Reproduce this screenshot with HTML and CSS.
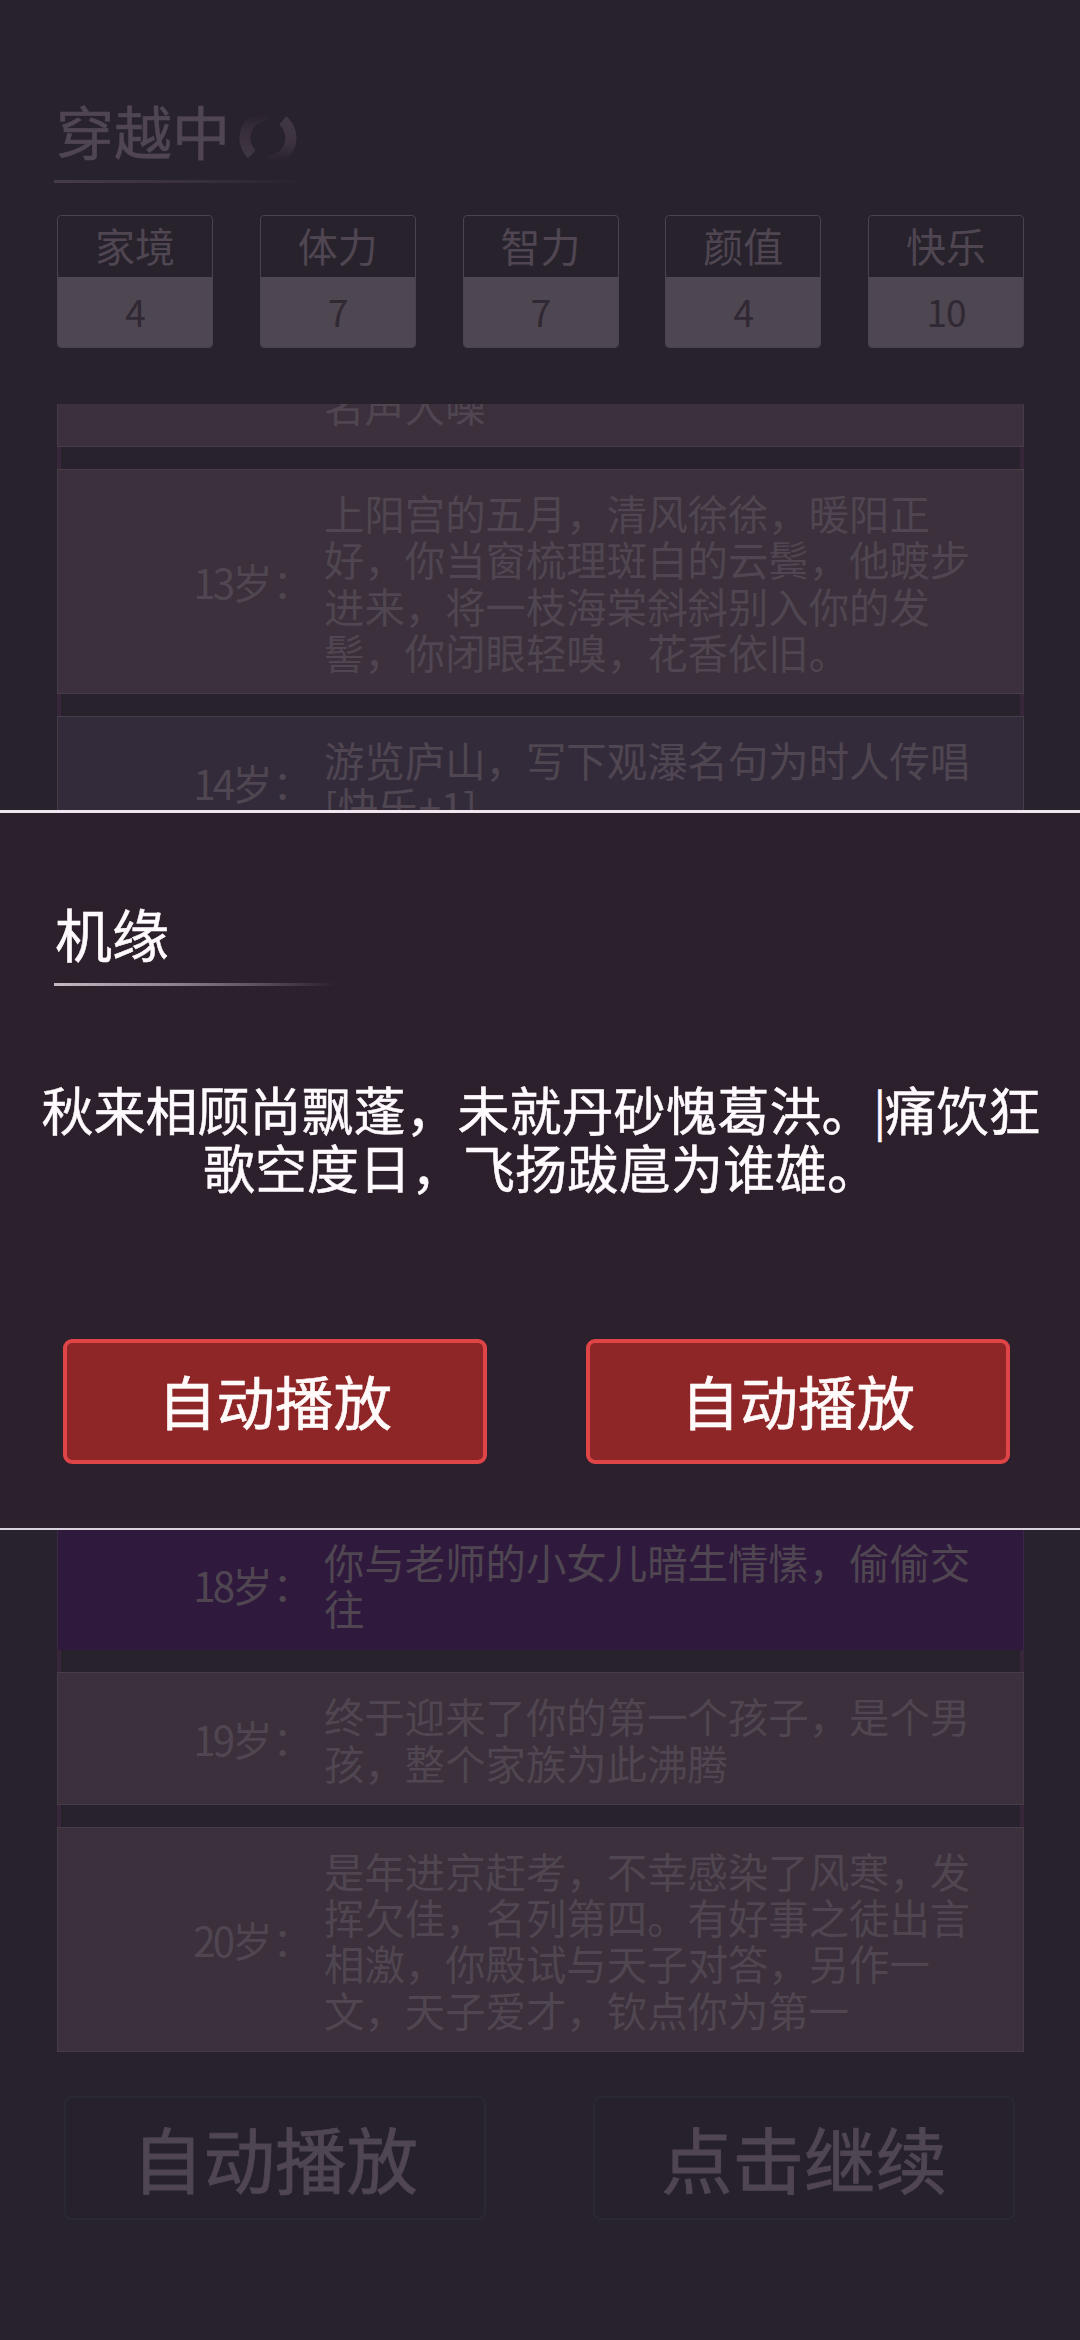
FILE: index.html
```html
<!DOCTYPE html>
<html lang="zh-CN">
<head>
<meta charset="utf-8">
<title>穿越中</title>
<link rel="stylesheet" href="styles.css">
</head>
<body>
<main class="game">
  <header class="heading">
    <h1 class="heading-text">穿越中</h1>
    <svg class="spinner" viewBox="0 0 60 60">
      <defs>
        <linearGradient id="arcRight" x1="0" y1="0" x2="0" y2="1"><stop offset="0" stop-color="#403743"/><stop offset="0.55" stop-color="#3c333f"/><stop offset="1" stop-color="#29222e"/></linearGradient>
        <linearGradient id="arcLeft" x1="0" y1="1" x2="0" y2="0"><stop offset="0" stop-color="#3f3642"/><stop offset="0.6" stop-color="#372e3a"/><stop offset="1" stop-color="#29222e"/></linearGradient>
      </defs>
      <path d="M44.800 12.400A23 23 0 0 1 30 53" fill="none" stroke="url(#arcRight)" stroke-width="11"/>
      <path d="M13.700 46.300A23 23 0 0 1 30 7" fill="none" stroke="url(#arcLeft)" stroke-width="11"/>
    </svg>
  </header>
  <div class="rule rule-dim"></div>

  <section class="stats">
    <div class="stat"><div class="stat-name">家境</div><div class="stat-value">4</div></div>
    <div class="stat"><div class="stat-name">体力</div><div class="stat-value">7</div></div>
    <div class="stat"><div class="stat-name">智力</div><div class="stat-value">7</div></div>
    <div class="stat"><div class="stat-name">颜值</div><div class="stat-value">4</div></div>
    <div class="stat"><div class="stat-name">快乐</div><div class="stat-value">10</div></div>
  </section>

  <section class="log">
    <div class="entry entry-clipped"><div class="age"></div><div class="story">名声大噪</div></div>
    <div class="entry"><div class="age"><span class="num">13</span>岁：</div><div class="story">上阳宫的五月，清风徐徐，暖阳正<br>好，你当窗梳理斑白的云鬓，他踱步<br>进来，将一枝海棠斜斜别入你的发<br>髻，你闭眼轻嗅，花香依旧。</div></div>
    <div class="entry entry-blue"><div class="age"><span class="num">14</span>岁：</div><div class="story">游览庐山，写下观瀑名句为时人传唱<br>[快乐+1]</div></div>
    <div class="entry entry-fill"></div>
    <div class="entry entry-purple"><div class="age"><span class="num">18</span>岁：</div><div class="story">你与老师的小女儿暗生情愫，偷偷交<br>往</div></div>
    <div class="entry"><div class="age"><span class="num">19</span>岁：</div><div class="story">终于迎来了你的第一个孩子，是个男<br>孩，整个家族为此沸腾</div></div>
    <div class="entry"><div class="age"><span class="num">20</span>岁：</div><div class="story">是年进京赶考，不幸感染了风寒，发<br>挥欠佳，名列第四。有好事之徒出言<br>相激，你殿试与天子对答，另作一<br>文，天子爱才，钦点你为第一</div></div>
  </section>

  <footer class="actions">
    <div class="action">自动播放</div>
    <div class="action">点击继续</div>
  </footer>
</main>

<section class="dialog">
  <h2 class="dialog-title">机缘</h2>
  <div class="rule rule-bright"></div>
  <p class="dialog-text">秋来相顾尚飘蓬，未就丹砂愧葛洪。<span class="bar">|</span>痛饮狂<br>歌空度日，飞扬跋扈为谁雄。</p>
  <div class="choices">
    <button class="choice">自动播放</button>
    <button class="choice">自动播放</button>
  </div>
</section>
</body>
</html>
```
FILE: styles.css
```css
* { box-sizing: border-box; }

body {
  margin: 0;
  background: #28222d;
  color: #4f4651;
  font-family: "Noto Sans CJK SC", sans-serif;
  font-weight: 400;
}

h1, h2, p { margin: 0; font-weight: 400; }

.game {
  display: flex;
  flex-direction: column;
  height: 2340px;
  padding: 96px 56px 120px 57px;
  overflow: hidden;
}

.heading {
  display: flex;
  align-items: center;
  gap: 8px;
  height: 68px;
}

.heading-text {
  margin-left: -1px;
  font-size: 58px;
  line-height: 68px;
  -webkit-text-stroke: 0.6px currentColor;
}

.spinner {
  width: 60px;
  height: 60px;
  margin-top: 15px;
}

.rule {
  width: 290px;
  height: 3px;
}

.rule-dim {
  margin: 16px 0 0 -3px;
  background: linear-gradient(90deg, #453c48, #3a313d 45%, #28222d 88%);
}

.stats {
  display: flex;
  justify-content: space-between;
  height: 133px;
  margin-top: 32px;
}

.stat {
  display: flex;
  flex-direction: column;
  width: 156px;
  overflow: hidden;
  border: 1.5px solid #4a424d;
  border-radius: 4px;
  text-align: center;
}

.stat-name {
  height: 61px;
  font-size: 40px;
  line-height: 58px;
}

.stat-value {
  flex: 1;
  background: #4e4650;
  color: #302833;
  font-size: 37px;
  letter-spacing: -1px;
  line-height: 69px;
}

.log {
  display: flex;
  flex-direction: column;
  gap: 22px;
  height: 1648px;
  margin-top: 56px;
  overflow: hidden;
  box-shadow: inset 4px 0 #38263b, inset -4px 0 #38263b;
}

.entry {
  display: flex;
  flex: none;
  align-items: center;
  padding: 20px 0 18px;
  border: 1px solid #453d48;
  background: #3b303b;
  font-size: 40.4px;
  line-height: 46.3px;
}

.entry-clipped {
  height: 43px;
  align-items: flex-end;
  border-top-color: #3b303b;
}

.entry-blue { background: #342b3a; }

.entry-purple {
  border-color: #3a2946;
  border-bottom-color: #2f1a3d;
  background: #2f1a3d;
}

.entry-fill { flex: 1; }

.age {
  width: 255px;
  text-align: right;
}

.num { letter-spacing: -3px; }

.story {
  margin-left: 11px;
  white-space: nowrap;
}

.actions {
  display: flex;
  justify-content: space-between;
  margin-top: 44px;
  padding: 0 9px 0 7px;
}

.action {
  width: 422px;
  height: 124px;
  border: 2px solid #2a2831;
  border-radius: 8px;
  background: #26212c;
  font-size: 71.500px;
  line-height: 119px;
  text-align: center;
  -webkit-text-stroke: 0.8px currentColor;
}

.dialog {
  position: absolute;
  top: 810px;
  left: 0;
  width: 1080px;
  height: 720px;
  padding: 85px 0 0;
  border-top: 3px solid #efe6ef;
  border-bottom: 2px solid #d9d2dc;
  background: #2c202d;
  color: #fffafd;
  -webkit-text-stroke: 0.5px currentColor;
}

.dialog-title {
  padding-left: 55px;
  font-size: 57px;
  line-height: 68px;
}

.rule-bright {
  margin: 17px 0 0 54px;
  background: linear-gradient(90deg, #c4bbc5, #8f8591 40%, #2c202d 97%);
}

.dialog-text {
  margin-top: 94px;
  padding-left: 2px;
  font-size: 52px;
  line-height: 57.800px;
  text-align: center;
  white-space: nowrap;
}

.bar {
  display: inline-block;
  width: 11px;
  font-size: 47px;
  line-height: 40px;
  vertical-align: 2px;
}

.choices {
  display: flex;
  justify-content: space-between;
  margin-top: 143px;
  padding: 0 70px 0 63px;
}

.choice {
  width: 424px;
  height: 125px;
  padding: 0 0 3px;
  border: 4px solid #df4446;
  border-radius: 9px;
  background: #8e2628;
  color: #fffafa;
  font-family: inherit;
  font-size: 58.500px;
  line-height: 114px;
  -webkit-text-stroke: 0.6px currentColor;
}
```
